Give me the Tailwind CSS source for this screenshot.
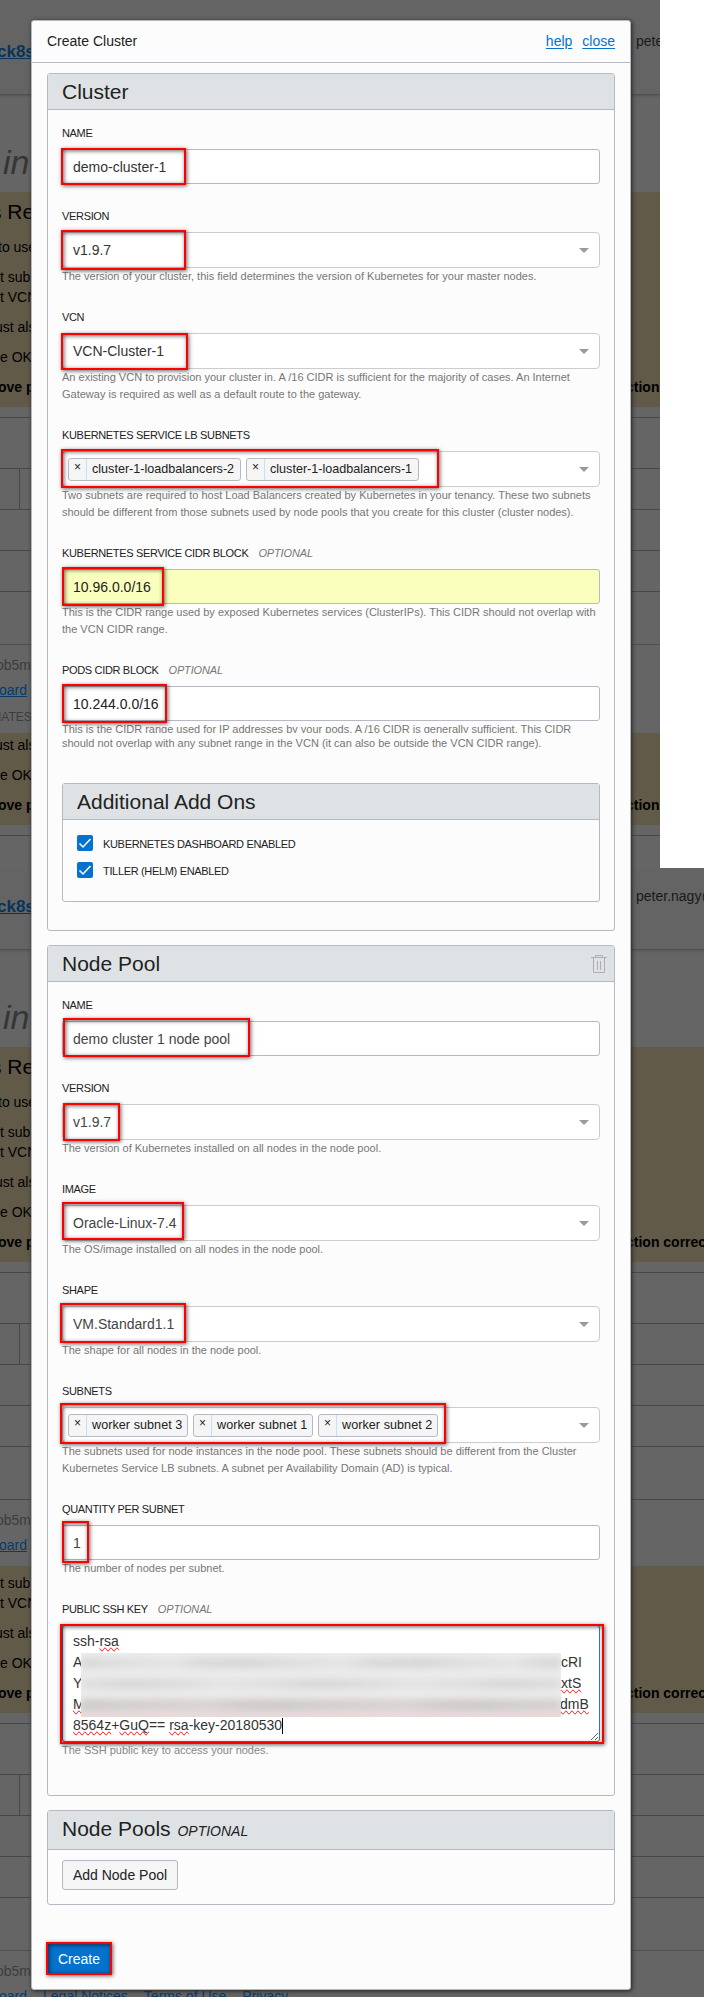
<!DOCTYPE html>
<html lang="en">
<head>
<meta charset="utf-8">
<title>Create Cluster</title>
<script src="https://cdn.jsdelivr.net/npm/@tailwindcss/browser@4"></script>
</head>
<body class="relative h-[1997px] w-[704px] overflow-hidden bg-white font-['Liberation_Sans',Arial,sans-serif] text-[14px] text-[#222]">

<!-- Dimmed console behind the dialog -->
<div class="h-[868px] w-[660px] overflow-hidden bg-[#656565] whitespace-nowrap text-black">
  <div class="flex h-[95px] border-b border-[#505050] bg-[#646464] shadow-[0_1px_2px_#555]">
    <b class="-ml-[3px] mt-[41px] w-[39px] shrink-0 text-[17px] leading-[22px] text-[#06345c] underline">ck8s</b>
    <span class="ml-[600px] mt-[31px] leading-[20px] text-[#1a1a1a]">pete</span>
  </div>
  <div class="h-[97px] pl-[3px] pt-[49px] text-[34px] leading-[36px] text-[#353535] italic">in</div>
  <div class="h-[215px] bg-[#625a48] pt-[8px]">
    <p class="-ml-[9px] text-[21px] leading-[24px]">s Re</p>
    <p class="-ml-[2px] mt-[13px] leading-[20px]">to use</p>
    <p class="mt-[10px] leading-[20px]">t sub</p>
    <p class="leading-[20px]">t VCN</p>
    <p class="-ml-[5px] mt-[10px] leading-[20px]">ust als</p>
    <p class="mt-[10px] leading-[20px]">e OK</p>
    <p class="mt-[10px] flex font-bold leading-[20px]"><span class="-ml-[2px] w-[628px] shrink-0">ove p</span><span>ction</span></p>
  </div>
  <div class="h-[11px] border-b border-[#484848]"></div>
  <div class="h-[51px] border-b border-[#484848]"></div>
  <div class="h-[41px] border-b border-[#484848]"><div class="h-full w-[20px] border-r border-[#484848]"></div></div>
  <div class="h-[41px] border-b border-[#484848]"></div>
  <div class="h-[41px] border-b border-[#484848]"></div>
  <div class="h-[53px] border-b border-[#505050]"></div>
  <div class="h-[88px] pt-[10px]">
    <p class="-ml-[4px] leading-[20px] text-[#3c3c3c]">ob5m</p>
    <p class="-ml-[1px] mt-[5px] leading-[20px] text-[#063b6c] underline">oard</p>
    <p class="-ml-[2px] mt-[9px] text-[12px] leading-[16px] text-[#3c3c3c]">IATES</p>
  </div>
  <div class="h-[92px] bg-[#625a48] pt-[2px]">
    <p class="-ml-[5px] leading-[20px]">ust als</p>
    <p class="mt-[10px] leading-[20px]">e OK</p>
    <p class="mt-[10px] flex font-bold leading-[20px]"><span class="-ml-[2px] w-[628px] shrink-0">ove p</span><span>ction</span></p>
  </div>
  <div class="h-[11px] border-b border-[#484848]"></div>
</div>
<div class="h-[1129px] w-[704px] overflow-hidden bg-[#656565] whitespace-nowrap text-black">
  <div class="flex h-[82px] border-b border-[#505050] bg-[#646464] shadow-[0_1px_2px_#555]">
    <b class="-ml-[3px] mt-[28px] w-[39px] shrink-0 text-[17px] leading-[22px] text-[#06345c] underline">ck8s</b>
    <span class="ml-[600px] mt-[18px] leading-[20px] text-[#1a1a1a]">peter.nagy@</span>
  </div>
  <div class="h-[97px] pl-[3px] pt-[49px] text-[34px] leading-[36px] text-[#353535] italic">in</div>
  <div class="h-[215px] bg-[#625a48] pt-[8px]">
    <p class="-ml-[9px] text-[21px] leading-[24px]">s Re</p>
    <p class="-ml-[2px] mt-[13px] leading-[20px]">to use</p>
    <p class="mt-[10px] leading-[20px]">t sub</p>
    <p class="leading-[20px]">t VCN</p>
    <p class="-ml-[5px] mt-[10px] leading-[20px]">ust als</p>
    <p class="mt-[10px] leading-[20px]">e OK</p>
    <p class="mt-[10px] flex font-bold leading-[20px]"><span class="-ml-[2px] w-[628px] shrink-0">ove p</span><span>ction correctly</span></p>
  </div>
  <div class="h-[11px] border-b border-[#484848]"></div>
  <div class="h-[51px] border-b border-[#484848]"></div>
  <div class="h-[41px] border-b border-[#484848]"><div class="h-full w-[20px] border-r border-[#484848]"></div></div>
  <div class="h-[41px] border-b border-[#484848]"></div>
  <div class="h-[41px] border-b border-[#484848]"></div>
  <div class="h-[53px] border-b border-[#484848]"></div>
  <div class="h-[66px] pt-[10px]">
    <p class="-ml-[4px] leading-[20px] text-[#3c3c3c]">ob5m</p>
    <p class="-ml-[1px] mt-[5px] leading-[20px] text-[#063b6c] underline">oard</p>
  </div>
  <div class="h-[147px] bg-[#625a48] pt-[7px]">
    <p class="leading-[20px]">t sub</p>
    <p class="leading-[20px]">t VCN</p>
    <p class="-ml-[5px] mt-[10px] leading-[20px]">ust als</p>
    <p class="mt-[10px] leading-[20px]">e OK</p>
    <p class="mt-[10px] flex font-bold leading-[20px]"><span class="-ml-[2px] w-[628px] shrink-0">ove p</span><span>ction correctly</span></p>
  </div>
  <div class="h-[11px] border-b border-[#484848]"></div>
  <div class="h-[51px] border-b border-[#484848]"></div>
  <div class="h-[41px] border-b border-[#484848]"><div class="h-full w-[20px] border-r border-[#484848]"></div></div>
  <div class="h-[41px] border-b border-[#484848]"></div>
  <div class="h-[41px] border-b border-[#484848]"></div>
  <div class="h-[53px] border-b border-[#505050]"></div>
  <div class="pt-[10px]">
    <p class="-ml-[4px] leading-[20px] text-[#3c3c3c]">ob5m</p>
    <p class="-ml-[1px] mt-[5px] flex gap-[16px] leading-[20px] text-[#063b6c]"><span>oard</span><span>Legal Notices</span><span>Terms of Use</span><span>Privacy</span></p>
  </div>
</div>

<!-- Dialog -->
<div class="absolute left-[31px] top-[20px] h-[1970px] w-[600px] rounded-[3px] border border-[#b0b8c0] bg-[#fcfcfc] shadow-[1px_1px_4px_#222]">
  <div class="flex h-[42px] items-center border-b border-[#b4b9c4] px-[15px]">
    <span class="flex-1">Create Cluster</span>
    <a class="mr-[10px] text-[#0572ce] underline underline-offset-2">help</a>
    <a class="text-[#0572ce] underline underline-offset-2">close</a>
  </div>

  <section class="mx-[15px] mt-[10px] h-[858px] rounded-[3px] border border-[#b4b9c4]">
    <h2 class="h-[36px] border-b border-[#b4b9c4] bg-[#dee2e5] px-[14px] text-[21px] leading-[35px]">Cluster</h2>
    <div class="px-[14px] pt-[15px]">
      <div class="mb-6">
        <div class="mb-2 text-[11px] leading-[16px] tracking-[-0.33px]">NAME</div>
        <div class="relative h-[35px] rounded-[3px] border border-[#b4b9c4] bg-white px-[10px] leading-[35px] text-[#333]">demo-cluster-1
          <i class="absolute -left-[2px] -top-[2px] h-[37px] w-[125px] border-2 border-[#f00] shadow-[1px_1px_4px_rgba(0,0,0,0.6),inset_1px_1px_4px_rgba(0,0,0,0.6)]"></i></div>
      </div>
      <div class="mb-6">
        <div class="mb-2 text-[11px] leading-[16px] tracking-[-0.33px]">VERSION</div>
        <div class="relative flex h-[36px] items-center justify-between rounded-[4px] border border-[#ccc] bg-white px-[10px] text-[#333]">v1.9.7<svg class="h-[5px] w-[10px]" viewBox="0 0 10 5"><path d="M0 0H10L5 5Z" fill="#999"/></svg>
          <i class="absolute -left-[2px] -top-[3px] h-[40px] w-[125px] border-2 border-[#f00] shadow-[1px_1px_4px_rgba(0,0,0,0.6),inset_1px_1px_4px_rgba(0,0,0,0.6)]"></i></div>
        <p class="text-[11px] leading-[17px] text-[#777]">The version of your cluster, this field determines the version of Kubernetes for your master nodes.</p>
      </div>
      <div class="mb-6">
        <div class="mb-2 text-[11px] leading-[16px] tracking-[-0.33px]">VCN</div>
        <div class="relative flex h-[36px] items-center justify-between rounded-[4px] border border-[#ccc] bg-white px-[10px] text-[#333]">VCN-Cluster-1<svg class="h-[5px] w-[10px]" viewBox="0 0 10 5"><path d="M0 0H10L5 5Z" fill="#999"/></svg>
          <i class="absolute -left-[2px] -top-[1px] h-[37px] w-[127px] border-2 border-[#f00] shadow-[1px_1px_4px_rgba(0,0,0,0.6),inset_1px_1px_4px_rgba(0,0,0,0.6)]"></i></div>
        <p class="whitespace-nowrap text-[11px] leading-[17px] text-[#777]">An existing VCN to provision your cluster in. A /16 CIDR is sufficient for the majority of cases. An Internet<br>Gateway is required as well as a default route to the gateway.</p>
      </div>
      <div class="mb-6">
        <div class="mb-2 text-[11px] leading-[16px] tracking-[-0.33px]">KUBERNETES SERVICE LB SUBNETS</div>
        <div class="relative flex h-[36px] items-center gap-[5px] rounded-[4px] border border-[#ccc] bg-white pl-[5px] pr-[10px]">
          <span class="flex h-[23px] w-[173px] rounded-[3px] border border-[#b4b9c4] bg-[#f5f5f5] text-[12.6px] leading-[20px]"><span class="w-[18px] border-r border-[#c2e0ff] text-center text-[12px] leading-[17px]">×</span><span class="pl-[5px]">cluster-1-loadbalancers-2</span></span>
          <span class="flex h-[23px] w-[173px] rounded-[3px] border border-[#b4b9c4] bg-[#f5f5f5] text-[12.6px] leading-[20px]"><span class="w-[18px] border-r border-[#c2e0ff] text-center text-[12px] leading-[17px]">×</span><span class="pl-[5px]">cluster-1-loadbalancers-1</span></span>
          <svg class="ml-auto h-[5px] w-[10px]" viewBox="0 0 10 5"><path d="M0 0H10L5 5Z" fill="#999"/></svg>
          <i class="absolute -left-[2px] -top-[3px] h-[39px] w-[378px] border-2 border-[#f00] shadow-[1px_1px_4px_rgba(0,0,0,0.6),inset_1px_1px_4px_rgba(0,0,0,0.6)]"></i></div>
        <p class="whitespace-nowrap text-[11px] leading-[17px] text-[#777]">Two subnets are required to host Load Balancers created by Kubernetes in your tenancy. These two subnets<br>should be different from those subnets used by node pools that you create for this cluster (cluster nodes).</p>
      </div>
      <div class="mb-6">
        <div class="mb-2 text-[11px] leading-[16px] tracking-[-0.33px]">KUBERNETES SERVICE CIDR BLOCK<i class="ml-[10px] tracking-[-0.15px] text-[#777]">OPTIONAL</i></div>
        <div class="relative h-[35px] rounded-[3px] border border-[#b4b9c4] bg-[#faffbd] px-[10px] leading-[35px]">10.96.0.0/16
          <i class="absolute -left-[1px] -top-[3px] h-[39px] w-[102px] border-2 border-[#f00] shadow-[1px_1px_4px_rgba(0,0,0,0.6),inset_1px_1px_4px_rgba(0,0,0,0.6)]"></i></div>
        <p class="whitespace-nowrap text-[11px] leading-[17px] text-[#777]">This is the CIDR range used by exposed Kubernetes services (ClusterIPs). This CIDR should not overlap with<br>the VCN CIDR range.</p>
      </div>
      <div>
        <div class="mb-2 text-[11px] leading-[16px] tracking-[-0.33px]">PODS CIDR BLOCK<i class="ml-[10px] tracking-[-0.15px] text-[#777]">OPTIONAL</i></div>
        <div class="relative h-[35px] rounded-[3px] border border-[#b4b9c4] bg-white px-[10px] leading-[35px]">10.244.0.0/16
          <i class="absolute -left-[1px] -top-[3px] h-[39px] w-[105px] border-2 border-[#f00] shadow-[1px_1px_4px_rgba(0,0,0,0.6),inset_1px_1px_4px_rgba(0,0,0,0.6)]"></i></div>
        <p class="h-[12px] overflow-hidden whitespace-nowrap text-[11px] leading-[17px] text-[#777]">This is the CIDR range used for IP addresses by your pods. A /16 CIDR is generally sufficient. This CIDR</p>
        <p class="mt-[3px] whitespace-nowrap text-[11px] leading-[14px] text-[#777]">should not overlap with any subnet range in the VCN (it can also be outside the VCN CIDR range).</p>
      </div>
      <section class="mt-[33px] h-[119px] rounded-[3px] border border-[#b4b9c4]">
        <h3 class="h-[36px] border-b border-[#b4b9c4] bg-[#dee2e5] px-[14px] text-[21px] leading-[35px]">Additional Add Ons</h3>
        <div class="flex flex-col gap-[11px] px-[14px] pt-[15px] text-[11px] leading-[16px] tracking-[-0.33px]">
          <div class="flex h-4 gap-[10px]"><svg class="size-4" viewBox="0 0 16 16"><rect width="16" height="16" rx="2" fill="#0572ce"/><path d="M2.5 8.5L6 12L13.5 4" fill="none" stroke="#fff" stroke-width="1.5"/></svg><span class="pt-px">KUBERNETES DASHBOARD ENABLED</span></div>
          <div class="flex h-4 gap-[10px]"><svg class="size-4" viewBox="0 0 16 16"><rect width="16" height="16" rx="2" fill="#0572ce"/><path d="M2.5 8.5L6 12L13.5 4" fill="none" stroke="#fff" stroke-width="1.5"/></svg><span class="pt-px">TILLER (HELM) ENABLED</span></div>
        </div>
      </section>
    </div>
  </section>

  <section class="mx-[15px] mt-[14px] h-[851px] rounded-[3px] border border-[#b4b9c4]">
    <h2 class="flex h-[36px] justify-between border-b border-[#b4b9c4] bg-[#dee2e5] pl-[14px] pr-[7px] text-[21px] leading-[35px]">Node Pool
      <svg class="mt-[9px] h-[18px] w-[16px]" viewBox="0 0 16 18" fill="none" stroke="#aeadb0"><path d="M0 2.5H16M4.5 2.5V.5H11.5V2.5M2.5 2.5V17.5H13.5V2.5M6.5 6V15M9.500 6V15"/></svg></h2>
    <div class="px-[14px] pt-[15px]">
      <div class="mb-6">
        <div class="mb-2 text-[11px] leading-[16px] tracking-[-0.33px]">NAME</div>
        <div class="relative h-[35px] rounded-[3px] border border-[#b4b9c4] bg-white px-[10px] leading-[35px] text-[#444]">demo cluster 1 node pool
          <i class="absolute left-0 -top-[4px] h-[39px] w-[187px] border-2 border-[#f00] shadow-[1px_1px_4px_rgba(0,0,0,0.6),inset_1px_1px_4px_rgba(0,0,0,0.6)]"></i></div>
      </div>
      <div class="mb-6">
        <div class="mb-2 text-[11px] leading-[16px] tracking-[-0.33px]">VERSION</div>
        <div class="relative flex h-[36px] items-center justify-between rounded-[4px] border border-[#ccc] bg-white px-[10px] text-[#444]">v1.9.7<svg class="h-[5px] w-[10px]" viewBox="0 0 10 5"><path d="M0 0H10L5 5Z" fill="#999"/></svg>
          <i class="absolute left-0 -top-[2px] h-[38px] w-[57px] border-2 border-[#f00] shadow-[1px_1px_4px_rgba(0,0,0,0.6),inset_1px_1px_4px_rgba(0,0,0,0.6)]"></i></div>
        <p class="text-[11px] leading-[17px] text-[#777]">The version of Kubernetes installed on all nodes in the node pool.</p>
      </div>
      <div class="mb-6">
        <div class="mb-2 text-[11px] leading-[16px] tracking-[-0.33px]">IMAGE</div>
        <div class="relative flex h-[36px] items-center justify-between rounded-[4px] border border-[#ccc] bg-white px-[10px] text-[#444]">Oracle-Linux-7.4<svg class="h-[5px] w-[10px]" viewBox="0 0 10 5"><path d="M0 0H10L5 5Z" fill="#999"/></svg>
          <i class="absolute -left-[1px] -top-[4px] h-[38px] w-[122px] border-2 border-[#f00] shadow-[1px_1px_4px_rgba(0,0,0,0.6),inset_1px_1px_4px_rgba(0,0,0,0.6)]"></i></div>
        <p class="text-[11px] leading-[17px] text-[#777]">The OS/image installed on all nodes in the node pool.</p>
      </div>
      <div class="mb-6">
        <div class="mb-2 text-[11px] leading-[16px] tracking-[-0.33px]">SHAPE</div>
        <div class="relative flex h-[36px] items-center justify-between rounded-[4px] border border-[#ccc] bg-white px-[10px] text-[#444]">VM.Standard1.1<svg class="h-[5px] w-[10px]" viewBox="0 0 10 5"><path d="M0 0H10L5 5Z" fill="#999"/></svg>
          <i class="absolute -left-[3px] -top-[4px] h-[40px] w-[126px] border-2 border-[#f00] shadow-[1px_1px_4px_rgba(0,0,0,0.6),inset_1px_1px_4px_rgba(0,0,0,0.6)]"></i></div>
        <p class="text-[11px] leading-[17px] text-[#777]">The shape for all nodes in the node pool.</p>
      </div>
      <div class="mb-6">
        <div class="mb-2 text-[11px] leading-[16px] tracking-[-0.33px]">SUBNETS</div>
        <div class="relative flex h-[36px] items-center gap-[5px] rounded-[4px] border border-[#ccc] bg-white pl-[5px] pr-[10px]">
          <span class="flex h-[23px] w-[120px] rounded-[3px] border border-[#b4b9c4] bg-[#f5f5f5] text-[12.6px] leading-[20px]"><span class="w-[18px] border-r border-[#c2e0ff] text-center text-[12px] leading-[17px]">×</span><span class="pl-[5px] tracking-[0.05px]">worker subnet 3</span></span>
          <span class="flex h-[23px] w-[120px] rounded-[3px] border border-[#b4b9c4] bg-[#f5f5f5] text-[12.6px] leading-[20px]"><span class="w-[18px] border-r border-[#c2e0ff] text-center text-[12px] leading-[17px]">×</span><span class="pl-[5px] tracking-[0.05px]">worker subnet 1</span></span>
          <span class="flex h-[23px] w-[120px] rounded-[3px] border border-[#b4b9c4] bg-[#f5f5f5] text-[12.6px] leading-[20px]"><span class="w-[18px] border-r border-[#c2e0ff] text-center text-[12px] leading-[17px]">×</span><span class="pl-[5px] tracking-[0.05px]">worker subnet 2</span></span>
          <svg class="ml-auto h-[5px] w-[10px]" viewBox="0 0 10 5"><path d="M0 0H10L5 5Z" fill="#999"/></svg>
          <i class="absolute -left-[3px] -top-[5px] h-[41px] w-[386px] border-2 border-[#f00] shadow-[1px_1px_4px_rgba(0,0,0,0.6),inset_1px_1px_4px_rgba(0,0,0,0.6)]"></i></div>
        <p class="whitespace-nowrap text-[11px] leading-[17px] text-[#777]">The subnets used for node instances in the node pool. These subnets should be different from the Cluster<br>Kubernetes Service LB subnets. A subnet per Availability Domain (AD) is typical.</p>
      </div>
      <div class="mb-6">
        <div class="mb-2 text-[11px] leading-[16px] tracking-[-0.33px]">QUANTITY PER SUBNET</div>
        <div class="relative h-[35px] rounded-[3px] border border-[#b4b9c4] bg-white px-[10px] leading-[35px] text-[#444]">1
          <i class="absolute -left-[1px] -top-[5px] h-[42px] w-[27px] border-2 border-[#f00] shadow-[1px_1px_4px_rgba(0,0,0,0.6),inset_1px_1px_4px_rgba(0,0,0,0.6)]"></i></div>
        <p class="text-[11px] leading-[17px] text-[#777]">The number of nodes per subnet.</p>
      </div>
      <div>
        <div class="mb-2 text-[11px] leading-[16px] tracking-[-0.33px]">PUBLIC SSH KEY<i class="ml-[10px] tracking-[-0.15px] text-[#777]">OPTIONAL</i></div>
        <div class="relative h-[117px] rounded-[3px] border border-[#3d76b0] bg-white px-[10px] pt-[5px] leading-[21px] text-[#333]">
          <p>ssh-<span class="[text-decoration-line:spelling-error]">rsa</span></p>
          <p class="flex"><span class="w-[488px]">A</span><span>cRI</span></p>
          <p class="flex"><span class="w-[488px]">Y</span><span class="[text-decoration-line:spelling-error]">xtS</span></p>
          <p class="flex"><span class="w-[487px] [text-decoration-line:spelling-error]">M</span><span class="[text-decoration-line:spelling-error]">dmB</span></p>
          <p class="flex items-center"><span><span class="[text-decoration-line:spelling-error]">8564z</span>+<span class="[text-decoration-line:spelling-error]">GuQ</span>== <span class="[text-decoration-line:spelling-error]">rsa</span>-key-20180530</span><span class="h-[16px] w-px bg-black"></span></p>
          <!-- Redacted part of the key -->
          <div class="absolute left-[18px] top-[27px] h-[64px] w-[480px] overflow-hidden bg-linear-to-b from-[#eeeeee] from-65% to-[#e9dada]">
            <div class="mt-[5px] h-[10px] bg-[repeating-linear-gradient(90deg,#d2d2d2_0,#dadada_34px,#e2e2e2_92px,#d5d5d5_121px,#d2d2d2_170px)] blur-[4px]"></div>
            <div class="mt-[11px] h-[10px] bg-[repeating-linear-gradient(90deg,#dcdcdc_0,#d3d3d3_48px,#dadada_105px,#e2e2e2_140px,#dcdcdc_190px)] blur-[4px]"></div>
            <div class="mt-[11px] h-[10px] bg-[repeating-linear-gradient(90deg,#c6c4c4_0,#cdcaca_42px,#d4d0d0_130px,#cbc7c7_160px,#c6c4c4_200px)] blur-[4px]"></div>
          </div>
          <svg class="absolute bottom-0 right-0 size-[9px]" viewBox="0 0 9 9" stroke="#555" stroke-width=".9"><path d="M1 8L8 1M5 8L8 5"/></svg>
          <i class="absolute -left-[3px] -top-[2px] h-[120px] w-[544px] border-2 border-[#f00] shadow-[1px_1px_4px_rgba(0,0,0,0.6),inset_1px_1px_4px_rgba(0,0,0,0.6)]"></i></div>
        <p class="text-[11px] leading-[17px] text-[#888]">The SSH public key to access your nodes.</p>
      </div>
    </div>
  </section>

  <section class="mx-[15px] mt-[14px] h-[95px] rounded-[3px] border border-[#b4b9c4]">
    <h2 class="h-[39px] border-b border-[#b4b9c4] bg-[#dee2e5] px-[14px] text-[21px] leading-[36px]">Node Pools <i class="ml-px text-[14px]">OPTIONAL</i></h2>
    <div class="px-[14px] pt-[10px]">
      <button class="h-[30px] w-[116px] rounded-[3px] border border-[#b4b9c4] bg-[#f5f5f5] text-[14px]">Add Node Pool</button>
    </div>
  </section>

  <button class="relative ml-[15px] mt-[38px] block h-[31px] w-[64px] rounded-[2px] bg-[#0572ce] pt-px text-[14px] text-white">Create
    <i class="absolute -left-[1px] -top-[1px] h-[33px] w-[66px] border-2 border-[#f00] shadow-[1px_1px_4px_rgba(0,0,0,0.6),inset_1px_1px_4px_rgba(0,0,0,0.6)]"></i></button>
</div>
</body>
</html>
